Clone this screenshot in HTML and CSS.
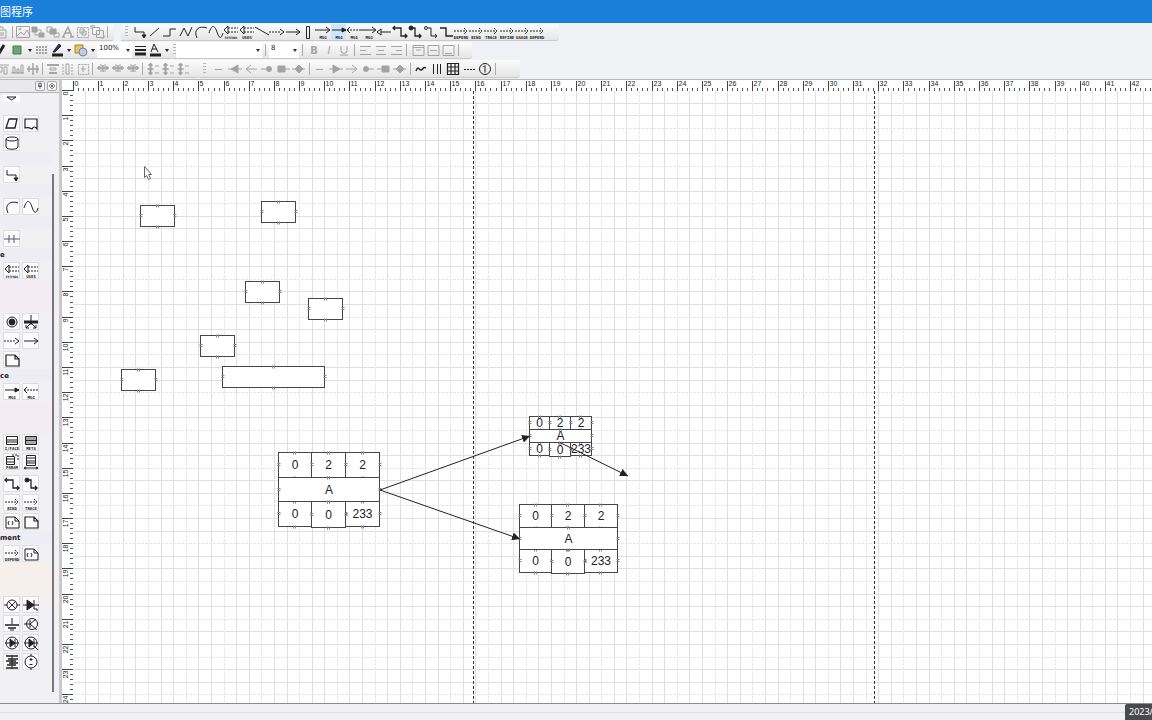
FILE: index.html
```html
<!DOCTYPE html>
<html lang="zh-CN">
<head>
<meta charset="utf-8">
<title>图程序</title>
<link rel="stylesheet" href="styles.css">
</head>
<body>
<div class="app">
  <header class="titlebar">图程序</header>
  <div class="toolbars">
    <div class="row row-objects">
      <div class="bar bar-start" data-tools="paste | image front back letter group ungroup |"></div>
      <div class="bar bar-connectors"><span class="grip"></span><div class="spread" data-tools="elbow line step zigzag arc wave extends uses slash dashArrow arrow box msgOpen msg* msgBack msgOpen triArrow elbowBoth elbowDot elbowRing stepDown depend bind trace refine usage depend"></div></div>
    </div>
    <div class="row row-format">
      <div class="bar bar-start">
        <div class="tools" data-tools="brush fill drop hatch pen drop shapes drop"></div>
        <label class="combo zoom"><span class="name">Zoom</span><select><option>100%</option></select></label>
        <div class="tools" data-tools="weight fontColor drop"></div>
      </div>
      <div class="bar">
        <span class="grip"></span>
        <label class="combo font"><span class="name">Font</span><select><option></option></select></label>
        <span class="sep"></span>
        <label class="combo size"><span class="name">Size</span><select><option>8</option></select></label>
        <div class="tools" data-tools="| bold italic underline | left center right | top middle bottom |"></div>
      </div>
    </div>
    <div class="row row-arrange">
      <div class="bar bar-start" data-tools="alignA alignB alignC | sameW sameH sameS | spaceH spaceH spaceH | spaceV spaceV spaceV"></div>
      <div class="bar bar-ends"><span class="grip"></span><div class="tools wide" data-tools="dash headL openL dotL squareL diamondL | dash headR openR dotR squareR diamondR | curve bars grid dots one |"></div></div>
    </div>
  </div>
  <main class="main">
    <aside class="sidebar">
      <div class="panel-head">
        <button class="mini" aria-label="Pin"><svg viewBox="0 0 10 10"><path d="M3.5 1.5h3v3.500h-3zM2.500 5.500h5M5 5.500v3"/></svg></button>
        <button class="mini" aria-label="Close"><svg viewBox="0 0 10 10"><path d="M2.500 2.500l5 5M7.500 2.500l-5 5M2 4v2M8 4v2M4 2h2M4 8h2"/></svg></button>
      </div>
      <div class="palette">
        <div class="peek"><svg viewBox="0 0 17 7"><path d="M4 2h9L8.500 5z"/></svg></div>
        <div class="cells" data-cells="parallelogram document cylinder"></div>
        <h2 class="tint"></h2><div class="cells" data-cells="elbow"></div>
        <h2></h2><div class="cells" data-cells="arc wave"></div>
        <h2></h2><div class="cells" data-cells="relation"></div>
        <h2>e</h2><div class="cells" data-cells="extends uses"></div>
        <h2 class="tall"></h2><div class="cells" data-cells="final fork dashArrow arrow note"></div>
        <h2>ce</h2><div class="cells" data-cells="msg msgBack"></div>
        <h2 class="tall"></h2><div class="cells" data-cells="iface meta params table"></div>
        <div class="cells cells-next" data-cells="elbowBoth elbowDot bind trace noteCode note"></div>
        <h2>ment</h2><div class="cells" data-cells="depend noteCode"></div>
        <h2 class="tall warm"></h2><div class="cells" data-cells="lamp diode ground transistor ledA ledB coil source"></div>
      </div>
      <span class="thumb"></span>
    </aside>
    <section class="workspace" aria-label="Drawing">
      <svg class="drawing" id="drawing"></svg>
    </section>
  </main>
  <footer class="status"><span class="date">2023/</span></footer>
</div>
<script src="app.js"></script>
</body>
</html>
```
FILE: styles.css
```css
* { box-sizing: border-box; }
body { margin: 0; font-family: "Liberation Sans", "Noto Sans CJK SC", sans-serif; font-size: 8px; color: #222; background: #f0f1f3; }
button, select { font: inherit; color: inherit; border: 0; padding: 0; margin: 0; background: none; }
svg { display: block; }
.app { display: flex; flex-direction: column; height: 100vh; overflow: hidden; }
.titlebar { height: 23px; flex: none; background: #197fd8; color: #fff; font: 11px/23px "Noto Sans CJK SC", sans-serif; }
.toolbars { flex: none; height: 57px; padding-top: 1px; background: #f0f2f5; border-bottom: 1px solid #b9b9b9; }
.row { display: flex; height: 18px; }
.row-objects { gap: 7px; }
.row-arrange { height: 19px; }
.bar { display: flex; align-items: center; height: 17px; background: linear-gradient(#fcfcfc, #e5e5e6); border-bottom: 1px solid #c9c9cb; border-radius: 0 0 3px 0; }
.row-arrange .bar { height: 18px; }
.row-objects .bar-start { width: 114px; }
.row-format .bar-start { width: 173px; }
.row-format .bar:last-child { width: 299px; }
.row-arrange .bar-start { width: 199px; }
.bar-start { overflow: hidden; }
.bar-start > :first-child { margin-left: -5px; }
.bar-connectors { width: 438px; }
.bar-ends { width: 321px; }
.spread { display: flex; width: 413px; margin-left: 2px; }
.spread .tool { flex: 1 1 0; min-width: 0; }
.tools { display: flex; align-items: center; }
.tool { display: flex; justify-content: center; width: 15px; height: 16px; flex: none; overflow: visible; }
.wide { margin-left: 3px; }
.wide .tool { width: 16px; }
.tool svg, .cell svg { width: 16px; height: 16px; flex: none; overflow: visible; }
.tool.drop { width: 9px; }
.tool.selected { background: #cfe5fa; }
.tool.faded { color: #a3a3a3; }
svg { fill: none; stroke: currentColor; stroke-width: 1; }
svg text { stroke: none; fill: currentColor; font-family: "DejaVu Sans", sans-serif; }
.caption { font-family: "DejaVu Sans Mono", monospace; font-size: 4px; font-weight: bold; }
.caption-long { font-size: 3px; }
.solid { fill: currentColor; }
.sep { width: 1px; height: 12px; margin: 0 2px; background: #aaa; flex: none; }
.row-format .sep { margin: 0 3px; }
.grip { width: 3px; height: 12px; flex: none; margin: 0 2px 0 4px; background: repeating-linear-gradient(#b6b6b6 0 1px, transparent 1px 3px); }
.row-format .grip { margin: 0; }
.combo { position: relative; display: block; background: #fff; height: 16px; flex: none; }
.combo::after { content: ""; position: absolute; right: 2px; top: 7px; border: 2px solid transparent; border-top: 3px solid #333; border-bottom: 0; }
.combo select { display: block; appearance: none; width: 100%; height: 16px; padding: 0 2px 4px; font: 7px/12px "DejaVu Sans", sans-serif; }
.name { position: absolute; width: 1px; height: 1px; overflow: hidden; clip-path: inset(50%); }
.zoom { width: 35px; }
.font { width: 86px; }
.size { width: 30px; }
.main { display: flex; flex: 1; min-height: 0; }
.sidebar { position: relative; display: flex; flex-direction: column; width: 62px; flex: none; background: #f1f0f3; border-right: 3px solid #c9c9cc; overflow: hidden; }
.panel-head { display: flex; flex: none; justify-content: flex-end; gap: 2px; height: 13px; padding: 1px 2px 0 0; background: #e9e9eb; border-bottom: 1px solid #b5b5b5; }
.mini { width: 10px; height: 10px; border: 1px solid #aaa; border-radius: 2px; background: #f6f6f6; color: #444; }
.palette { flex: 1; min-height: 0; overflow: hidden; padding-left: 3px; }
.peek { width: 17px; height: 7px; margin: 2px 0 12px; background: #fff; }
.cells { display: grid; grid-template-columns: 17px 17px; grid-auto-rows: 17px; gap: 2px; padding: 1px 0; }
.cells-next { margin-top: 3px; }
.cell { display: flex; align-items: center; justify-content: center; width: 17px; height: 17px; background: #fbfbfb; border: 1px solid #dedee1; }
.palette h2 { height: 13px; margin: 0 8px 0 -3px; font: bold 7px/14px "DejaVu Sans", sans-serif; color: #222; background: #efedf4; }
.palette h2.tall { height: 32px; background: #f3edf1; }
.palette h2.warm { background: #f6f0ed; }
.thumb { position: absolute; left: 52px; top: 94px; bottom: 11px; width: 2px; background: #77777b; }
.workspace { flex: 1; min-width: 0; overflow: hidden; background: #fff; }
.drawing { width: 100%; height: 100%; color: #222; }
.drawing text { font-family: "Liberation Sans", sans-serif; }
.status { display: flex; justify-content: flex-end; flex: none; height: 17px; background: linear-gradient(#f1f1f3 8px, #dedee0 8px 9px, #f1f1f3 9px); border-top: 1px solid #8b8b8f; }
.date { width: 27px; padding-left: 4px; border-radius: 2px 0 0 0; background: #4a4a4c; color: #fff; font: 9px/16px "Noto Sans", sans-serif; }
```
FILE: app.js
```js
const label = t => `<text class="caption${t.length > 6 ? ' caption-long' : ''}" x="8" y="15" text-anchor="middle">${t}</text>`;
const dep = t => `<path d="M1 7h13M11 4l3 3-3 3" stroke-dasharray="2 1"/>${label(t)}`;
const back = t => `<path d="M5 4h10M5 8h10" stroke-dasharray="2 1"/><path d="M5 2L1 6l4 4z"/>${label(t)}`;
const flip = s => `<g transform="translate(16 0) scale(-1 1)">${s}</g>`;
const head = '<path d="M1 8h14"/><path class="solid" d="M5 4l7 4-7 4z"/>';
const open = '<path d="M2 8h11M8 4l5 4-5 4"/>';
const dot = '<path d="M2 8h6"/><circle class="solid" cx="10" cy="8" r="2.500"/>';
const square = '<path d="M1 8h5"/><path class="solid" d="M6 5h7v6H6z"/>';
const diamond = '<path d="M1 8h13"/><path class="solid" d="M4 8l4-4 4 4-4 4z"/>';
const bipolar = '<circle cx="8" cy="8" r="6"/><path d="M1 8h14M11 4v8"/><path class="solid" d="M6 4l5 4-5 4z"/>';
const icons = {
  paste: '<path d="M0 3h8v3M1 2h4v2M3 6h8v8H3zM5 9h4M5 11h4"/>',
  image: '<path d="M1.500 2.500h13v11h-13zM2 12l4-4 3 3 3-5 3 6"/><circle cx="5" cy="5" r="1"/>',
  front: '<path class="solid" d="M2 3h5v5H2zM9 9h5v4H9z"/><path d="M5 6h6v5H5z"/>',
  back: '<path d="M2 3h5v5H2zM9 9h5v4H9z"/><path class="solid" d="M5 5h6v5H5z"/>',
  letter: '<path d="M3 13L8 3l4 10M5 9h6M2 13h3M10 13h4" stroke-width="1.500"/>',
  group: '<path d="M2.500 3.500h11v10h-11z" stroke-dasharray="2 1"/><path d="M5 5h4v4H5zM7 7h4v4H7z"/>',
  ungroup: '<path d="M2.500 3.500h7v7h-7zM6.500 6.500h7v7h-7z"/><path d="M1 1v4M1 2h4M11 14h3v-3"/>',
  elbow: '<path d="M3 3v5h9v5"/><path class="solid" d="M10 11h4l-2 3z"/>',
  line: '<path d="M3 12L12 4"/>',
  step: '<path d="M1 12h7V5h6"/>',
  zigzag: '<path d="M2 12L6 4l4 8 4-9"/>',
  arc: '<path d="M4 14C0 6 6 1 14 4"/>',
  wave: '<path d="M1 9C4-1 7 2 9 8s4 8 6 1"/>',
  extends: back('EXTENDS'), uses: back('USES'),
  slash: '<path d="M1 3l14 8"/>',
  dashArrow: '<path d="M0 8h11" stroke-dasharray="2 1"/><path d="M11 5l4 3-4 3"/>',
  arrow: '<path d="M1 8h14M11 5l4 3-4 3"/>',
  box: '<path d="M6.500 2.500h3v12h-3z"/>',
  msg: `<path d="M1 6h14"/><path class="solid" d="M11 4l4 2-4 2z"/>${label('MSG')}`,
  msgOpen: `<path d="M0 6h14M11 3l4 3-4 3"/>${label('MSG')}`,
  msgBack: `<path d="M1 6h14" stroke-dasharray="2 1"/><path d="M4 3L1 6l3 3"/>${label('MSG')}`,
  triArrow: '<path d="M5 8h10"/><path d="M5 5L1 8l4 3z"/>',
  elbowBoth: '<path d="M1 4h8v8h6M3 2L1 4l2 2M13 10l2 2-2 2" stroke-width="1.300"/>',
  elbowDot: '<circle class="solid" cx="4" cy="4" r="2"/><path d="M4 4h4v8h6M12 10l2 2-2 2" stroke-width="1.300"/>',
  elbowRing: '<circle cx="4" cy="4" r="1.500"/><path d="M6 4h3v8h6M13 10l2 2-2 2"/>',
  stepDown: '<path d="M2 4h6v8h7" stroke-width="1.400"/>',
  depend: dep('DEPEND'), bind: dep('BIND'), trace: dep('TRACE'), refine: dep('REFINE'), usage: dep('USAGE'),
  brush: '<path d="M3 13l6-10" stroke-width="3"/>',
  fill: '<path d="M3 4h8v8H3z" fill="#70a477" stroke="#477a50"/>',
  drop: '<path class="solid" stroke="none" d="M6 7h4l-2 3z"/>',
  hatch: '<path d="M2 5h12M2 8h12M2 11h12" stroke-width="2" stroke-dasharray="2 1"/>',
  pen: '<path d="M4 10l6-8 2 2-6 6z" fill="#26318c"/><path d="M3 13h11" stroke-width="3"/>',
  shapes: '<path d="M2 3h8v8H2z" fill="#e5c466" stroke="#aa812c"/><circle cx="10" cy="10" r="4" fill="#c3ccdf" stroke="#7182a6"/>',
  weight: '<path d="M3 4.500h11"/><path d="M3 8h11" stroke-width="2"/><path d="M3 12h11" stroke-width="3"/>',
  fontColor: '<path d="M4 10l3-8 4 8M5 7h5"/><path d="M3 13h11" stroke-width="3"/>',
  bold: '<text x="8" y="12" font-size="10" font-weight="bold" text-anchor="middle">B</text>',
  italic: '<text x="8" y="12" font-size="10" font-style="italic" text-anchor="middle">I</text>',
  underline: '<path d="M5 4v6q3 3 6 0V4M4 13h8"/>',
  left: '<path d="M2 4.500h11M2 8.500h6M2 12.500h11"/>', center: '<path d="M3 4.500h10M5 8.500h6M3 12.500h10"/>', right: '<path d="M3 4.500h11M8 8.500h6M3 12.500h11"/>',
  top: '<path d="M3 3.500h11v10H3zM3 5.500h11M6 8h5"/>', middle: '<path d="M3 3.500h11v10H3zM5 8.500h7"/>', bottom: '<path d="M3 3.500h11v10H3zM5 11.500h7"/>',
  alignA: '<path d="M2 4h12M4 6h3v5H4zM9 6h3v7H9z"/>', alignB: '<path d="M1 12h13M3 6h2v6H3zM7 8h2v4H7zM11 4h2v8h-2z"/>', alignC: '<path d="M2 8h12M4 5v6M8 2v12M12 4v8" stroke-width="1.500"/>',
  sameW: '<path d="M2 4h12M4 12h8" stroke-width="2"/><path d="M5 7h6v2H5z"/>',
  sameH: '<path d="M3 3v11M12 3v11" stroke-dasharray="2 1"/><path d="M6 3h3v10H6z"/>',
  sameS: '<path d="M3.500 3.500h10v10h-10z" stroke-dasharray="2 1"/><path d="M6 8h5M8 5v6"/>',
  spaceH: '<path d="M2 7h12M4 5v4M8 4v7M12 5v4" stroke-width="1.500"/><path d="M6 3v8M10 3v8" stroke-width="1"/>',
  spaceV: '<path class="solid" d="M4 3h3v2H4zM4 7h3v2H4zM4 11h3v2H4z"/><path d="M5.500 2v12M2 8h7M10 5h4M10 12h4"/>',
  dash: '<path d="M4 8.500h7"/>',
  headR: head, headL: flip(head), openR: open, openL: flip(open), dotR: flip(dot), dotL: dot,
  squareR: square, squareL: flip(square), diamondR: diamond, diamondL: diamond,
  curve: '<path d="M3 10c2-6 3-1 5-1s2-4 5-2" stroke-width="1.400"/>',
  bars: '<path d="M4.500 3v10M8.500 3v10M11.500 3v10"/>',
  grid: '<path d="M2.500 2.500h11v11h-11zM2 6h12M2 10h12M6 2v12M10 2v12" stroke-width="1.200"/>',
  dots: '<path d="M3 8.500h11" stroke-dasharray="2 1"/>',
  one: '<circle cx="8" cy="8" r="5.500"/><path d="M6.500 6L8 4.500v7"/>',
  parallelogram: '<path d="M5 3h8l-2 9H2z" stroke-width="1.300"/>',
  document: '<path d="M2 3h12v10q-3-4-5 0-4-2-7-1z" stroke-width="1.200"/>',
  cylinder: '<path d="M2 4v8c1 3 11 3 12 0V4"/><ellipse cx="8" cy="4" rx="6" ry="2"/>',
  relation: '<path d="M0 8h16M5 4v8M10 4v8" stroke="#555580"/>',
  final: '<circle cx="8" cy="8" r="5"/><circle class="solid" cx="8" cy="8" r="3"/>',
  fork: '<path d="M1 8h14" stroke-width="3"/><path d="M8 1v10M8 9l-5 5M8 9l5 5M3 11v3h3M13 11v3h-3"/>',
  note: '<path d="M2 3h9l4 4v7H2zM11 3v4h4" stroke-width="1.200"/>',
  noteCode: '<path d="M2 3h9l4 4v7H2zM11 3v4h4M5 7L4 9l1 2M8 7l1 2-1 2"/>',
  iface: `<path d="M2.500 1.500h11v8h-11zM2 5h12M2 7h12"/>${label('I/FACE')}`,
  meta: `<path d="M2.500 1.500h11v8h-11z" fill="#aaa"/><path d="M3 5.500h10"/>${label('META')}`,
  params: `<path d="M2.500 2.500h8v8h-8zM2 5h9M2 8h9"/><path d="M8 1h6v5" stroke-dasharray="2 1"/>${label('PARAM')}`,
  table: '<path d="M3.500 1.500h9v10h-9zM3 4h10M3 7h10M3 9h10M1 14h14M3 13l-2 1 2 1M13 13l2 1-2 1"/>',
  lamp: '<circle cx="8" cy="8" r="5"/><path d="M4 4l8 8M12 4l-8 8M0 8h3M13 8h3"/>',
  diode: '<path d="M0 8h16M11 3v9h3v2"/><path class="solid" d="M4 3l7 5-7 5z"/>',
  ground: '<path d="M8 2v6M6 14h4"/><path d="M1 9h14M4 12h8" stroke-width="1.500"/>',
  transistor: '<circle cx="9" cy="8" r="5.500"/><path d="M1 8h6M7 4v8M7 8l6-5M7 8l7 6"/>',
  ledA: bipolar, ledB: bipolar + '<path d="M11 11l4 4"/>',
  coil: '<path d="M2 2h12M4 5h10M2 7h10M5 9h9M3 11h9M2 14h12" stroke-width="1.500"/><path d="M8 1v14"/>',
  source: '<circle cx="8" cy="8" r="6"/><path d="M8 0v2M8 14v2M6.500 5.500h3M8 4v3M6.500 10.500h3"/>'
};
const draw = n => `<svg viewBox="0 0 16 16" aria-hidden="true">${icons[n]}</svg>`;
const dark = new Set('brush fill drop pen shapes weight fontColor curve bars grid dots one'.split(' '));
document.querySelectorAll('[data-tools]').forEach(host => {
  host.innerHTML = host.dataset.tools.split(' ').map(item => {
    if (item === '|') return '<span class="sep"></span>';
    const n = item.replace('*', '');
    const cls = ['tool'];
    if (n === 'drop') cls.push('drop');
    if (item !== n) cls.push('selected');
    if (!host.classList.contains('spread') && !dark.has(n)) cls.push('faded');
    return `<button class="${cls.join(' ')}" aria-label="${n}">${draw(n)}</button>`;
  }).join('');
});
document.querySelectorAll('[data-cells]').forEach(host => {
  host.innerHTML = host.dataset.cells.split(' ').map(n => `<button class="cell" aria-label="${n}">${draw(n)}</button>`).join('');
});

const surface = document.getElementById('drawing');
const originX = 62, originY = 80, zeroX = 73, zeroY = 91, unit = 25.18;
const seg = (x1, y1, x2, y2) => `M${x1} ${y1}L${x2} ${y2}`;
const crisp = v => Math.floor(v) + 0.5;

function marks(x, y, w, h) {
  const cx = Math.round(x + w / 2) - 0.5, cy = Math.round(y + h / 2) - 0.5;
  return [y, y + h].map(v => seg(cx - 1, v - 1, cx - 1, v + 2) + seg(cx + 1, v - 1, cx + 1, v + 2)).join('') +
    [x, x + w].map(v => seg(v - 1, cy - 1, v + 2, cy - 1) + seg(v - 1, cy + 1, v + 2, cy + 1)).join('');
}
function node(x, y, w, h, text = '') {
  return `<rect x="${x}" y="${y}" width="${w}" height="${h}" fill="#fff" stroke="#45454b"/>` +
    `<path d="${marks(x, y, w, h)}" stroke="#85858d"/>` +
    (text ? `<text x="${x + w / 2}" y="${y + h / 2 + 4}" font-size="12" text-anchor="middle">${text}</text>` : '');
}
function block(xs, ys) {
  const cell = (c, r, text) => node(xs[c], ys[r], xs[c + 1] - xs[c], ys[r + 1] - ys[r], text);
  return cell(0, 0, '0') + cell(1, 0, '2') + cell(2, 0, '2') + cell(0, 2, '0') + cell(2, 2, '233') +
    node(xs[1], ys[2], xs[2] - xs[1], ys[3] - ys[2] + 1, '0') +
    node(xs[0], ys[1], xs[3] - xs[0], ys[2] - ys[1], 'A');
}
function render() {
  const right = originX + surface.clientWidth, bottom = originY + surface.clientHeight;
  let lines = '', faint = '', ticks = '', minor = '', numbers = '';
  for (let i = 1; zeroX + i * unit / 2 < right; i++) {
    const x = crisp(zeroX + i * unit / 2);
    if (i % 3) lines += seg(x, zeroY, x, bottom); else faint += seg(x, zeroY, x, bottom);
  }
  for (let i = 1; zeroY + i * unit / 2 < bottom; i++) {
    const y = crisp(zeroY - 0.5 + i * unit / 2);
    if (i % 3) lines += seg(zeroX, y, right, y); else faint += seg(zeroX, y, right, y);
  }
  for (let i = 0; zeroX + i * unit / 5 < right; i++) {
    const x = crisp(zeroX + i * unit / 5);
    if (i % 5) minor += seg(x, 88, x, 91);
    else {
      ticks += seg(x, 81, x, 91);
      numbers += `<text x="${x + 1}" y="86" font-size="7">${i / 5}</text>`;
    }
  }
  for (let i = 0; zeroY + i * unit / 5 < bottom; i++) {
    const y = crisp(zeroY - 0.5 + i * unit / 5);
    if (i % 5) minor += seg(70, y, 73, y);
    else {
      ticks += seg(62, y, 73, y);
      numbers += `<text transform="translate(68 ${y + 1}) rotate(-90)" text-anchor="end" font-size="7">${i / 5}</text>`;
    }
  }
  const boxes = [[140.5, 205.5, 34], [261.5, 201.5, 34], [245.5, 281.5, 34], [308.5, 298.5, 34], [200.5, 335.5, 34], [121.5, 369.5, 34], [222.5, 366.5, 102]];
  surface.innerHTML = `
    <defs><marker id="head" viewBox="0 0 8 8" refX="8" refY="4" markerWidth="8" markerHeight="8" orient="auto" markerUnits="userSpaceOnUse"><path class="solid" stroke="none" d="M0 0l8 4-8 4z"/></marker></defs>
    <g transform="translate(${-originX} ${-originY})">
      <g shape-rendering="crispEdges">
        <path d="${lines}" stroke="#e0e0e4"/>
        <path d="${faint}" stroke="#e6e6ea" stroke-dasharray="3 1"/>
        <path d="${minor}" stroke="#555"/>
        <path d="${ticks}" stroke="#444"/>
        <path d="M473.500 91V${bottom}M874.500 91V${bottom}" stroke="#333" stroke-dasharray="3 2"/>
      </g>
      <g fill="#333">${numbers}</g>
      ${boxes.map(b => node(...b, 21)).join('')}
      ${block([278.5, 311.5, 345.5, 379.5], [452.5, 477.5, 501.5, 526.5])}
      ${block([529.5, 549.5, 570.5, 591.5], [416.5, 429.5, 442.5, 455.5])}
      ${block([519.5, 551.5, 584.5, 617.5], [504.5, 527.5, 549.5, 572.5])}
      <path d="M380 490L530 436" marker-end="url(#head)"/>
      <path d="M380 490L520 539" marker-end="url(#head)"/>
      <path d="M561 443L628 476" marker-end="url(#head)"/>
      <path d="M144.500 166.500v11l2-2 2 4 2-1-2-4h3z" fill="#fff" stroke="#666"/>
    </g>`;
}
render();
addEventListener('resize', render);
```
